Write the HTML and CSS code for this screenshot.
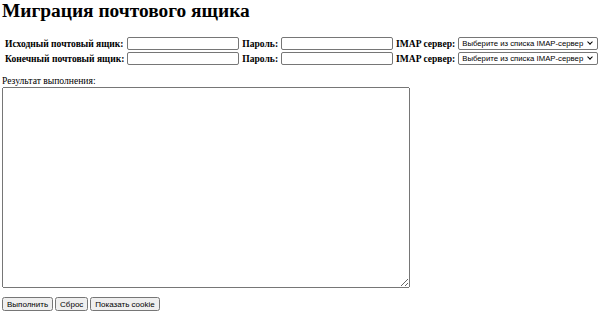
FILE: index.html
```html
<!DOCTYPE html>
<html lang="ru">
<head>
  <meta charset="UTF-8">
  <title>Миграция почтового ящика</title>
  <link rel="stylesheet" href="styles.css">
</head>
<body>
  <h1>Миграция почтового ящика</h1>

  <table class="accounts">
    <tr>
      <th>Исходный почтовый ящик:</th>
      <td><input type="text"></td>
      <th>Пароль:</th>
      <td><input type="password"></td>
      <th>IMAP сервер:</th>
      <td>
        <span class="selectBox">
          <select>
            <option>Выберите из списка IMAP-сервер</option>
          </select>
        </span>
      </td>
    </tr>
    <tr>
      <th>Конечный почтовый ящик:</th>
      <td><input type="text"></td>
      <th>Пароль:</th>
      <td><input type="password"></td>
      <th>IMAP сервер:</th>
      <td>
        <span class="selectBox">
          <select>
            <option>Выберите из списка IMAP-сервер</option>
          </select>
        </span>
      </td>
    </tr>
  </table>

  <div class="result">
    <div class="resultLabel">Результат выполнения:</div>
    <textarea></textarea>
  </div>

  <div class="buttons">
    <button>Выполнить</button>
    <button>Сброс</button>
    <button>Показать cookie</button>
  </div>
</body>
</html>
```

FILE: styles.css
```css
html, body {
  margin: 0;
  padding: 0;
  background: #fff;
}

body {
  padding: 0 2px;
  font-family: "Liberation Serif", serif;
  font-size: 9.6px;
  color: #000;
}

h1 {
  margin: 0 0 14px 0;
  font-size: 19.4px;
  font-weight: bold;
  line-height: 21px;
}

.accounts {
  border-spacing: 2px;
}

.accounts th {
  text-align: left;
  font-weight: bold;
  font-size: 9.55px;
  padding: 0 1px;
  white-space: nowrap;
}

.accounts td {
  padding: 0;
}

.accounts input {
  box-sizing: border-box;
  width: 112px;
  height: 13px;
  font-size: 8px;
  padding: 0 1px;
  border: 1px solid #767676;
  border-radius: 2px;
  margin: 0;
  display: block;
}

/* select with a small drawn chevron */
.selectBox {
  position: relative;
  display: block;
  width: 140px;
}

.selectBox select {
  appearance: none;
  -webkit-appearance: none;
  box-sizing: border-box;
  width: 140px;
  height: 13px;
  font-family: "Liberation Sans", sans-serif;
  font-size: 7.75px;
  color: #000;
  background: #fff;
  border: 1px solid #767676;
  border-radius: 2px;
  padding: 0 9px 0 3px;
  margin: 0;
  display: block;
}

.selectBox::after {
  content: "";
  position: absolute;
  right: 6px;
  top: 3px;
  width: 3px;
  height: 3px;
  border-right: 1.5px solid #000;
  border-bottom: 1.5px solid #000;
  transform: rotate(45deg);
  pointer-events: none;
}

.result {
  margin-top: 8px;
}

.resultLabel {
  line-height: 12px;
}

.result textarea {
  box-sizing: border-box;
  display: block;
  width: 408px;
  height: 201px;
  margin: 0;
}

.buttons {
  margin-top: 9px;
  display: flex;
  gap: 2px;
}

.buttons button {
  box-sizing: border-box;
  height: 14px;
  font-family: "Liberation Sans", sans-serif;
  font-size: 8px;
  padding: 0 3px;
  margin: 0;
}
```
